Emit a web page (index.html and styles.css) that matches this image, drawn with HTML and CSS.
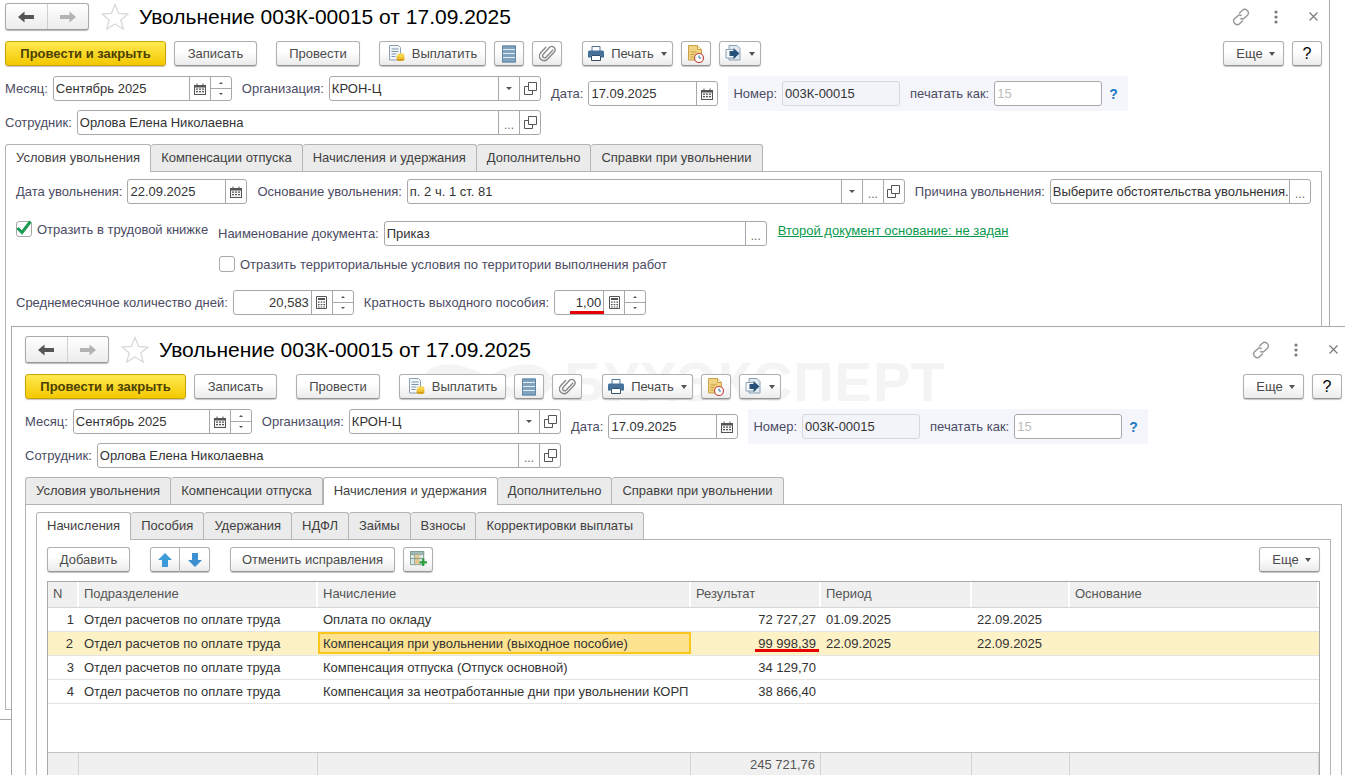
FILE: index.html
```html
<!DOCTYPE html>
<html lang="ru">
<head>
    <meta charset="UTF-8">
    <title>Увольнение 003К-00015 от 17.09.2025</title>
    <link rel="stylesheet" href="styles.css">
</head>
<body>

<svg class="sprite" xmlns="http://www.w3.org/2000/svg">
    <symbol id="i-back" viewBox="0 0 16 12"><path d="M0 6 6.5.5V4H16v4H6.5v3.5z"/></symbol>
    <symbol id="i-forward" viewBox="0 0 16 12"><path d="M16 6 9.5.5V4H0v4h9.5v3.5z"/></symbol>
    <symbol id="i-star" viewBox="0 0 28 27"><path d="M14 1.5 17.6 10.4 27 11 19.8 17 22.2 26 14 21 5.8 26 8.2 17 1 11 10.4 10.4z" fill="#fff" stroke="#d9d9d9" stroke-width="1.3"/></symbol>
    <symbol id="i-link" viewBox="0 0 18 18"><g fill="none" stroke="#9a9a9a" stroke-width="1.5" stroke-linecap="round"><path d="M7.5 5 10.5 2.2a3 3 0 0 1 4.4 0l.6.6a3 3 0 0 1 0 4.4L12.4 10a3 3 0 0 1-3.6.5"/><path d="M10.5 13 7.5 15.8a3 3 0 0 1-4.4 0l-.6-.6a3 3 0 0 1 0-4.4L5.6 8a3 3 0 0 1 3.6-.5"/></g></symbol>
    <symbol id="i-dots" viewBox="0 0 4 14"><g fill="#7b7b7b"><circle cx="2" cy="2" r="1.6"/><circle cx="2" cy="7" r="1.6"/><circle cx="2" cy="12" r="1.6"/></g></symbol>
    <symbol id="i-close" viewBox="0 0 9 9"><path d="M.5.5l8 8M8.5.5l-8 8" stroke="#777" stroke-width="1.1" fill="none"/></symbol>
    <symbol id="i-cal" viewBox="0 0 12 12"><path d="M0 2h2.5V.5h1V2h5V.5h1V2H12v10H0z" fill="#555"/><path d="M1 4.5h10V11H1z" fill="#f4f4f4"/><path d="M2 5.5h2v1.3H2zM5 5.5h2v1.3H5zM8 5.5h2v1.3H8zM2 8h2v1.3H2zM5 8h2v1.3H5zM8 8h2v1.3H8z" fill="#555"/></symbol>
    <symbol id="i-calc" viewBox="0 0 11 13"><path d="M.5.5h10v12H.5z" fill="#fff" stroke="#555"/><path d="M2 2h7v2H2zM2 5.5h1.6v1.3H2zM4.7 5.5h1.6v1.3H4.7zM7.4 5.5H9v1.3H7.4zM2 8h1.6v1.3H2zM4.7 8h1.6v1.3H4.7zM7.4 8H9v1.3H7.4zM2 10.4h1.6v1.2H2zM4.7 10.4h1.6v1.2H4.7zM7.4 10.4H9v1.2H7.4z" fill="#555"/></symbol>
    <symbol id="i-open" viewBox="0 0 13 13"><g fill="none" stroke="#555"><path d="M4.5.5h8v8h-8z"/><path d="M4 4.5H.5v8h8V9"/></g></symbol>
    <symbol id="i-pay" viewBox="0 0 17 17"><path d="M1.5.5h9l2 2V15h-11z" fill="#f4f7fa" stroke="#8d9fb2"/><path d="M3.5 4h7M3.5 6.5h7M3.5 9h5M3.5 11.5h4" stroke="#7d93aa"/><ellipse cx="12.5" cy="14" rx="4" ry="2" fill="#d69d14"/><ellipse cx="12.5" cy="12" rx="4" ry="2" fill="#efc236"/><ellipse cx="13" cy="10" rx="3.5" ry="1.8" fill="#f6d54d"/></symbol>
    <symbol id="i-list" viewBox="0 0 14 18"><path d="M0 .5h14v17H0z" fill="#7fa3bf"/><path d="M0 4.5h14M0 8.500h14M0 12.500h14" stroke="#e6eef4" stroke-width="1.2"/><path d="M.5 1h13v16H.5z" fill="none" stroke="#5f85a3"/></symbol>
    <symbol id="i-clip" viewBox="0 0 18 18"><path d="M15 5.500 7.500 13.500a2.200 2.200 0 0 1-3.200-3L11 3.200a3.500 3.500 0 0 1 5 4.900L8.500 16a5 5 0 0 1-7-7l6-6.300" transform="translate(0 -.5)" fill="none" stroke="#868686" stroke-width="1.4"/></symbol>
    <symbol id="i-print" viewBox="0 0 16 15"><path d="M4 .5h8v5H4z" fill="#fff" stroke="#4d7396"/><path d="M1.500 4.500h13a1.500 1.500 0 0 1 1.500 1.500v5.500h-3V9H3v2.500H0V6a1.500 1.500 0 0 1 1.500-1.500z" fill="#45709a"/><path d="M3.500 9.500h9v5h-9z" fill="#fff" stroke="#33506c"/></symbol>
    <symbol id="i-report" viewBox="0 0 16 18"><path d="M.5.500h9l4 4V15H.5z" fill="#f0d283" stroke="#c9a24a"/><path d="M9.500.5v4h4" fill="#fbeec4" stroke="#c9a24a"/><path d="M2.500 7h6M2.500 9.500h4M2.500 12h3" stroke="#c89f3d"/><circle cx="11" cy="13" r="4.500" fill="#fff" stroke="#c2483e" stroke-width="1.200"/><path d="M11 10.500V13h2" stroke="#2f6ea5" fill="none"/></symbol>
    <symbol id="i-move" viewBox="0 0 16 17"><path d="M3.500.5h8l3 3V15h-11z" fill="#e3e9f0" stroke="#8aa0b5"/><path d="M.5 4.500h7l2 2V13H.5z" fill="#f7f9fb" stroke="#8aa0b5"/><path d="M4 6h4V3l6 5.500L8 14v-3H4z" fill="#27517a"/></symbol>
    <symbol id="i-up" viewBox="0 0 14 14"><path d="M7 0 14 7H10V14H4V7H0z" fill="#3c9ad8"/></symbol>
    <symbol id="i-down" viewBox="0 0 14 14"><path d="M7 14 14 7H10V0H4V7H0z" fill="#3c8fd0"/></symbol>
    <symbol id="i-addcol" viewBox="0 0 18 18"><path d="M.5.500h14v14H.5z" fill="#dbe8e2" stroke="#7d9a93"/><path d="M.5.500h14v3H.5z" fill="#a6bdb6" stroke="#7d9a93"/><path d="M5 4v10" stroke="#7d9a93"/><path d="M5.500 4h4.500v10H5.500z" fill="#e8c68a"/><path d="M.5 8h14" stroke="#7d9a93"/><path d="M10 12h8M14 8v8" stroke="#2f9e3f" stroke-width="2.400"/></symbol>
    <symbol id="i-check" viewBox="0 0 16 15"><path d="M1.500 8 6 12.500 14.500 1.500" fill="none" stroke="#1d9a52" stroke-width="3"/></symbol>
    <symbol id="i-mark" viewBox="0 0 150 50"><path d="M4 25C14 5 40 5 75 25 110 45 136 45 146 25M4 25C14 45 40 45 75 25 110 5 136 5 146 25" fill="none" stroke="currentColor" stroke-width="11"/></symbol>
</svg>

<section class="window window-back">
    <div class="win-head">
        <div class="nav-group">
            <span class="nav-btn"><svg class="ico-nav dark"><use href="#i-back"/></svg></span>
            <span class="nav-btn"><svg class="ico-nav light"><use href="#i-forward"/></svg></span>
        </div>
        <svg class="ico-star"><use href="#i-star"/></svg>
        <h1 class="title">Увольнение 003К-00015 от 17.09.2025</h1>
        <div class="win-tools">
            <svg class="ico-link"><use href="#i-link"/></svg>
            <svg class="ico-dots"><use href="#i-dots"/></svg>
            <svg class="ico-close"><use href="#i-close"/></svg>
        </div>
    </div>

    <div class="commands">
        <button class="btn btn-default w-post-close">Провести и закрыть</button>
        <button class="btn w-save">Записать</button>
        <button class="btn w-post">Провести</button>
        <button class="btn w-pay"><svg class="ico-17"><use href="#i-pay"/></svg>Выплатить</button>
        <button class="btn btn-icon"><svg class="ico-list"><use href="#i-list"/></svg></button>
        <button class="btn btn-icon"><svg class="ico-17"><use href="#i-clip"/></svg></button>
        <button class="btn w-print"><svg class="ico-print"><use href="#i-print"/></svg>Печать<i class="caret"></i></button>
        <button class="btn btn-icon"><svg class="ico-report"><use href="#i-report"/></svg></button>
        <button class="btn w-move"><svg class="ico-17"><use href="#i-move"/></svg><i class="caret"></i></button>
        <div class="commands-right">
            <button class="btn w-more">Еще<i class="caret"></i></button>
            <button class="btn btn-help">?</button>
        </div>
    </div>

    <div class="head-fields">
        <div class="head-left">
            <div class="line">
                <label class="lbl">Месяц:</label>
                <div class="field w-month"><span class="val">Сентябрь 2025</span><span class="fbtn"><svg class="ico-12"><use href="#i-cal"/></svg></span><span class="fbtn spin"><i class="tri up"></i><i class="tri"></i></span></div>
                <label class="lbl lbl-gap">Организация:</label>
                <div class="field grow"><span class="val">КРОН-Ц</span><span class="fbtn"><i class="tri"></i></span><span class="fbtn"><svg class="ico-13"><use href="#i-open"/></svg></span></div>
            </div>
            <div class="line">
                <label class="lbl">Сотрудник:</label>
                <div class="field grow"><span class="val">Орлова Елена Николаевна</span><span class="fbtn dots">...</span><span class="fbtn"><svg class="ico-13"><use href="#i-open"/></svg></span></div>
            </div>
        </div>
        <div class="head-date">
            <label class="lbl">Дата:</label>
            <div class="field w-date"><span class="val">17.09.2025</span><span class="fbtn"><svg class="ico-12"><use href="#i-cal"/></svg></span></div>
        </div>
        <div class="number-box">
            <label class="lbl">Номер:</label>
            <div class="field field-soft w-number"><span class="val">003К-00015</span></div>
            <label class="lbl lbl-print">печатать как:</label>
            <div class="field w-print-as"><span class="val val-muted">15</span></div>
            <span class="hint">?</span>
        </div>
    </div>

    <div class="tabs">
        <span class="tab active">Условия увольнения</span>
        <span class="tab">Компенсации отпуска</span>
        <span class="tab">Начисления и удержания</span>
        <span class="tab">Дополнительно</span>
        <span class="tab">Справки при увольнении</span>
    </div>
    <div class="panel panel-conditions">
        <div class="line">
            <label class="lbl">Дата увольнения:</label>
            <div class="field w-dismiss"><span class="val">22.09.2025</span><span class="fbtn"><svg class="ico-12"><use href="#i-cal"/></svg></span></div>
            <label class="lbl lbl-gap">Основание увольнения:</label>
            <div class="field w-basis"><span class="val">п. 2 ч. 1 ст. 81</span><span class="fbtn"><i class="tri"></i></span><span class="fbtn dots">...</span><span class="fbtn"><svg class="ico-13"><use href="#i-open"/></svg></span></div>
            <label class="lbl lbl-gap">Причина увольнения:</label>
            <div class="field grow"><span class="val">Выберите обстоятельства увольнения...</span><span class="fbtn dots">...</span></div>
        </div>
        <div class="line line-doc">
            <span class="check-wrap check-main"><span class="check"><svg class="ico-check"><use href="#i-check"/></svg></span><span class="lbl">Отразить в трудовой книжке</span></span>
            <label class="lbl lbl-doc">Наименование документа:</label>
            <div class="field w-doc"><span class="val">Приказ</span><span class="fbtn dots">...</span></div>
            <a class="doc-link">Второй документ основание: не задан</a>
        </div>
        <div class="check-wrap check-terr"><span class="check"></span><span class="lbl">Отразить территориальные условия по территории выполнения работ</span></div>
        <div class="line line-days">
            <label class="lbl">Среднемесячное количество дней:</label>
            <div class="field w-days"><span class="val val-num">20,583</span><span class="fbtn"><svg class="ico-calc"><use href="#i-calc"/></svg></span><span class="fbtn spin"><i class="tri up"></i><i class="tri"></i></span></div>
            <label class="lbl lbl-gap">Кратность выходного пособия:</label>
            <div class="field w-rate"><span class="val val-num marked">1,00</span><span class="fbtn"><svg class="ico-calc"><use href="#i-calc"/></svg></span><span class="fbtn spin"><i class="tri up"></i><i class="tri"></i></span></div>
        </div>
    </div>
</section>

<section class="window window-front">
    <div class="watermark"><svg class="mark"><use href="#i-mark"/></svg><span>БУХЭКСПЕРТ</span></div>
    <div class="win-head">
        <div class="nav-group">
            <span class="nav-btn"><svg class="ico-nav dark"><use href="#i-back"/></svg></span>
            <span class="nav-btn"><svg class="ico-nav light"><use href="#i-forward"/></svg></span>
        </div>
        <svg class="ico-star"><use href="#i-star"/></svg>
        <h1 class="title">Увольнение 003К-00015 от 17.09.2025</h1>
        <div class="win-tools">
            <svg class="ico-link"><use href="#i-link"/></svg>
            <svg class="ico-dots"><use href="#i-dots"/></svg>
            <svg class="ico-close"><use href="#i-close"/></svg>
        </div>
    </div>

    <div class="commands">
        <button class="btn btn-default w-post-close">Провести и закрыть</button>
        <button class="btn w-save">Записать</button>
        <button class="btn w-post">Провести</button>
        <button class="btn w-pay"><svg class="ico-17"><use href="#i-pay"/></svg>Выплатить</button>
        <button class="btn btn-icon"><svg class="ico-list"><use href="#i-list"/></svg></button>
        <button class="btn btn-icon"><svg class="ico-17"><use href="#i-clip"/></svg></button>
        <button class="btn w-print"><svg class="ico-print"><use href="#i-print"/></svg>Печать<i class="caret"></i></button>
        <button class="btn btn-icon"><svg class="ico-report"><use href="#i-report"/></svg></button>
        <button class="btn w-move"><svg class="ico-17"><use href="#i-move"/></svg><i class="caret"></i></button>
        <div class="commands-right">
            <button class="btn w-more">Еще<i class="caret"></i></button>
            <button class="btn btn-help">?</button>
        </div>
    </div>

    <div class="head-fields">
        <div class="head-left">
            <div class="line">
                <label class="lbl">Месяц:</label>
                <div class="field w-month"><span class="val">Сентябрь 2025</span><span class="fbtn"><svg class="ico-12"><use href="#i-cal"/></svg></span><span class="fbtn spin"><i class="tri up"></i><i class="tri"></i></span></div>
                <label class="lbl lbl-gap">Организация:</label>
                <div class="field grow"><span class="val">КРОН-Ц</span><span class="fbtn"><i class="tri"></i></span><span class="fbtn"><svg class="ico-13"><use href="#i-open"/></svg></span></div>
            </div>
            <div class="line">
                <label class="lbl">Сотрудник:</label>
                <div class="field grow"><span class="val">Орлова Елена Николаевна</span><span class="fbtn dots">...</span><span class="fbtn"><svg class="ico-13"><use href="#i-open"/></svg></span></div>
            </div>
        </div>
        <div class="head-date">
            <label class="lbl">Дата:</label>
            <div class="field w-date"><span class="val">17.09.2025</span><span class="fbtn"><svg class="ico-12"><use href="#i-cal"/></svg></span></div>
        </div>
        <div class="number-box">
            <label class="lbl">Номер:</label>
            <div class="field field-soft w-number"><span class="val">003К-00015</span></div>
            <label class="lbl lbl-print">печатать как:</label>
            <div class="field w-print-as"><span class="val val-muted">15</span></div>
            <span class="hint">?</span>
        </div>
    </div>

    <div class="tabs">
        <span class="tab">Условия увольнения</span>
        <span class="tab">Компенсации отпуска</span>
        <span class="tab active">Начисления и удержания</span>
        <span class="tab">Дополнительно</span>
        <span class="tab">Справки при увольнении</span>
    </div>
    <div class="panel panel-accruals">
        <div class="tabs">
            <span class="tab active">Начисления</span>
            <span class="tab">Пособия</span>
            <span class="tab">Удержания</span>
            <span class="tab">НДФЛ</span>
            <span class="tab">Займы</span>
            <span class="tab">Взносы</span>
            <span class="tab">Корректировки выплаты</span>
        </div>
        <div class="panel panel-inner">
            <div class="commands table-commands">
                <button class="btn w-add">Добавить</button>
                <div class="btn-pair">
                    <button class="btn btn-half"><svg class="ico-14"><use href="#i-up"/></svg></button>
                    <button class="btn btn-half"><svg class="ico-14"><use href="#i-down"/></svg></button>
                </div>
                <button class="btn w-undo">Отменить исправления</button>
                <button class="btn btn-icon"><svg class="ico-17"><use href="#i-addcol"/></svg></button>
                <div class="commands-right">
                    <button class="btn w-more">Еще<i class="caret"></i></button>
                </div>
            </div>

            <div class="grid">
                <div class="grid-row grid-head">
                    <span class="cell">N</span>
                    <span class="cell">Подразделение</span>
                    <span class="cell">Начисление</span>
                    <span class="cell">Результат</span>
                    <span class="cell">Период</span>
                    <span class="cell"></span>
                    <span class="cell">Основание</span>
                </div>
                <div class="grid-body">
                    <div class="grid-row">
                        <span class="cell num">1</span>
                        <span class="cell">Отдел расчетов по оплате труда</span>
                        <span class="cell">Оплата по окладу</span>
                        <span class="cell num">72 727,27</span>
                        <span class="cell">01.09.2025</span>
                        <span class="cell">22.09.2025</span>
                        <span class="cell"></span>
                    </div>
                    <div class="grid-row selected">
                        <span class="cell num">2</span>
                        <span class="cell">Отдел расчетов по оплате труда</span>
                        <span class="cell current">Компенсация при увольнении (выходное пособие)</span>
                        <span class="cell num"><span class="marked">99 998,39</span></span>
                        <span class="cell">22.09.2025</span>
                        <span class="cell">22.09.2025</span>
                        <span class="cell"></span>
                    </div>
                    <div class="grid-row">
                        <span class="cell num">3</span>
                        <span class="cell">Отдел расчетов по оплате труда</span>
                        <span class="cell">Компенсация отпуска (Отпуск основной)</span>
                        <span class="cell num">34 129,70</span>
                        <span class="cell"></span>
                        <span class="cell"></span>
                        <span class="cell"></span>
                    </div>
                    <div class="grid-row">
                        <span class="cell num">4</span>
                        <span class="cell">Отдел расчетов по оплате труда</span>
                        <span class="cell">Компенсация за неотработанные дни при увольнении КОРП</span>
                        <span class="cell num">38 866,40</span>
                        <span class="cell"></span>
                        <span class="cell"></span>
                        <span class="cell"></span>
                    </div>
                </div>
                <div class="grid-row grid-foot">
                    <span class="cell"></span>
                    <span class="cell"></span>
                    <span class="cell"></span>
                    <span class="cell num">245 721,76</span>
                    <span class="cell"></span>
                    <span class="cell"></span>
                    <span class="cell"></span>
                </div>
            </div>
        </div>
    </div>
</section>

</body>
</html>
```

FILE: styles.css
```css
html, body {
    margin: 0;
    height: 775px;
    overflow: hidden;
    background: white;
}

body {
    font-family: "Liberation Sans", Arial, sans-serif;
    font-size: 13px;
    color: #3a3a3a;
}

.sprite {
    position: absolute;
    width: 0;
    height: 0;
}

svg {
    display: block;
    flex: none;
}

/* windows */
.window {
    box-sizing: border-box;
    width: 1330px;
    background: white;
}

.window-back {
    height: 720px;
    padding: 3px 7px 0 5px;
    border-right: 1px solid #a9a9a9;
    border-bottom: 1px solid #a9a9a9;
}

.window-front {
    position: absolute;
    left: 11px;
    top: 326px;
    z-index: 1;
    width: 1345px;
    height: 470px;
    padding: 9px 0 0 13px;
    border: 1px solid #a9a9a9;
    border-right: none;
}

.window-front > * {
    width: 1317px;
}

.watermark {
    position: absolute;
    left: 410px;
    top: 30px;
    z-index: -1;
    display: flex;
    align-items: center;
    gap: 12px;
    color: #f4f4f4;
    font-size: 56px;
    font-weight: bold;
    line-height: 50px;
    letter-spacing: 1px;
}

.mark {
    width: 130px;
    height: 50px;
}

.win-head {
    display: flex;
    align-items: center;
    height: 27px;
    margin-bottom: 11px;
}

.nav-group {
    display: flex;
    box-sizing: border-box;
    width: 84px;
    height: 27px;
    border: 1px solid #ababab;
    border-bottom-color: #999;
    border-radius: 3px;
    background: linear-gradient(#fff, #ececec);
    box-shadow: 0 1px 1px #bbb;
}

.nav-btn {
    flex: 1;
    display: flex;
    align-items: center;
    justify-content: center;
}

.nav-btn + .nav-btn {
    border-left: 1px solid #cfcfcf;
}

.ico-nav {
    width: 16px;
    height: 12px;
}

.ico-nav.dark { fill: #555; }
.ico-nav.light { fill: #b3b3b3; }

.ico-star {
    width: 28px;
    height: 27px;
    margin-left: 12px;
}

.title {
    margin: 0 0 0 10px;
    font-size: 21px;
    font-weight: normal;
    color: black;
    white-space: nowrap;
}

.win-tools {
    display: flex;
    align-items: center;
    margin-left: auto;
}

.ico-link {
    width: 18px;
    height: 18px;
    margin-right: 24px;
}

.ico-dots {
    width: 4px;
    height: 14px;
    margin-right: 31px;
}

.ico-close {
    width: 9px;
    height: 9px;
    margin-right: 4px;
}

/* buttons */
.commands {
    display: flex;
    gap: 8px;
    height: 25px;
    margin-bottom: 10px;
}

.commands-right {
    display: flex;
    gap: 8px;
    margin-left: auto;
}

.btn {
    display: flex;
    align-items: center;
    justify-content: center;
    box-sizing: border-box;
    height: 25px;
    padding: 0;
    border: 1px solid #b0b0b0;
    border-bottom-color: #949494;
    border-radius: 3px;
    background: linear-gradient(#fff 40%, #ebebeb);
    box-shadow: 0 1px 1px #c4c4c4;
    color: #4a4a4a;
    font-family: inherit;
    font-size: 13px;
}

.btn-default {
    border-color: #c9a400;
    background: linear-gradient(#ffea52, #f3c800);
    color: #4c4100;
    font-weight: bold;
}

.btn-icon {
    width: 30px;
}

.btn-help {
    width: 30px;
    font-size: 16px;
    color: black;
}

.w-post-close { width: 161px; }
.w-save { width: 83px; }
.w-post { width: 84px; margin-left: 11px; }
.w-pay { width: 107px; margin-left: 11px; gap: 7px; }
.w-print { width: 91px; margin-left: 12px; gap: 7px; }
.w-move { width: 42px; gap: 7px; }
.w-more { width: 61px; gap: 6px; padding-left: 4px; }
.w-add { width: 83px; }
.w-undo { width: 165px; margin-left: 12px; }

.btn-pair {
    display: flex;
    margin-left: 12px;
}

.btn-half {
    width: 30px;
    border-radius: 3px 0 0 3px;
}

.btn-half + .btn-half {
    border-left: none;
    border-radius: 0 3px 3px 0;
}

.caret {
    width: 0;
    height: 0;
    border: 3.5px solid transparent;
    border-top: 4px solid #555;
    border-bottom: none;
}

.ico-17 { width: 17px; height: 17px; }
.ico-list { width: 14px; height: 18px; }
.ico-print { width: 16px; height: 15px; }
.ico-report { width: 16px; height: 18px; }
.ico-14 { width: 14px; height: 14px; }
.ico-12 { width: 12px; height: 12px; }
.ico-13 { width: 13px; height: 13px; }
.ico-calc { width: 11px; height: 13px; }

/* form fields */
.head-fields {
    display: flex;
    align-items: flex-start;
    margin-bottom: 9px;
}

.head-left {
    display: flex;
    flex-direction: column;
    gap: 9px;
    width: 536px;
}

.head-date {
    display: flex;
    align-items: center;
    margin: 5px 0 0 10px;
}

.number-box {
    display: flex;
    align-items: center;
    box-sizing: border-box;
    height: 35px;
    margin-left: 10px;
    padding: 0 8px 0 5px;
    background: #f5f6fc;
}

.line {
    display: flex;
    align-items: center;
}

.lbl {
    margin-right: 5px;
    white-space: nowrap;
    color: #4b4b63;
}

.lbl-gap {
    margin-left: 10px;
}

.lbl-print {
    margin-left: 10px;
}

.field {
    display: flex;
    box-sizing: border-box;
    height: 25px;
    border: 1px solid #a8a8a8;
    border-radius: 3px;
    background: white;
}

.field-soft {
    border-color: #d7d7de;
    background: #f3f4f9;
}

.grow {
    flex: 1;
    min-width: 0;
}

.val {
    flex: 1;
    min-width: 0;
    padding-left: 2px;
    line-height: 23px;
    white-space: nowrap;
    overflow: hidden;
    color: #333;
}

.val-num {
    padding: 0 2px 0 0;
    text-align: right;
}

.val-muted {
    color: #bdbdbd;
}

.fbtn {
    display: flex;
    flex: none;
    align-items: center;
    justify-content: center;
    width: 20px;
    border-left: 1px solid #a8a8a8;
}

.fbtn.dots {
    align-items: flex-end;
    line-height: 18px;
    color: #666;
    font-size: 12px;
}

.fbtn.spin {
    flex-direction: column;
    justify-content: space-around;
    background: linear-gradient(transparent 11px, #a8a8a8 11px, #a8a8a8 12px, transparent 12px);
}

.tri {
    width: 0;
    height: 0;
    border: 3px solid transparent;
    border-top: 3px solid #555;
    border-bottom: none;
}

.spin .tri {
    border-width: 2px 2px 0;
}

.spin .tri.up {
    border-width: 0 2px 2px;
    border-top: none;
    border-bottom: 2px solid #555;
}

.w-month { width: 179px; }
.w-date { width: 130px; }
.w-number { width: 118px; }
.w-print-as { width: 108px; }
.w-dismiss { width: 120px; }
.w-basis { width: 498px; }
.w-doc { width: 383px; }
.w-days { width: 121px; }
.w-rate { width: 92px; }

.hint {
    margin-left: 5px;
    color: #1a7ac2;
    font-weight: bold;
    font-size: 14px;
    padding: 0 2px;
}

.marked {
    position: relative;
}

.marked::after {
    content: "";
    position: absolute;
    left: -3px;
    right: -3px;
    bottom: -1px;
    height: 3px;
    background: #e60000;
}

.val.marked {
    overflow: visible;
}

.val.marked::after {
    left: 15px;
    right: -1px;
    bottom: 0;
}

/* tabs */
.tabs {
    display: flex;
    align-items: flex-end;
    height: 27px;
}

.tab {
    box-sizing: border-box;
    height: 27px;
    padding: 0 10px;
    border: 1px solid #b4b4b4;
    border-bottom: none;
    border-left: none;
    border-radius: 3px 3px 0 0;
    background: #ebebeb;
    line-height: 26px;
    white-space: nowrap;
    color: #3f3f3f;
}

.tab:first-child {
    border-left: 1px solid #b4b4b4;
}

.tab.active {
    height: 28px;
    margin-bottom: -1px;
    border-left: 1px solid #b4b4b4;
    background: white;
    position: relative;
}

.tab.active:first-child {
    margin-left: 0;
}

.tab.active + .tab {
    border-left: none;
}

.panel {
    box-sizing: border-box;
    border: 1px solid #b4b4b4;
}

.panel-conditions {
    height: 539px;
    padding: 7px 10px 0;
}

.panel-accruals {
    height: 280px;
    padding: 7px 10px 0;
}

.panel-inner {
    height: 270px;
    padding: 7px 10px 0;
}

.line-doc {
    align-items: flex-start;
    margin-top: 17px;
}

.line-doc .lbl-doc {
    line-height: 25px;
}

.check-wrap {
    display: flex;
    align-items: center;
}

.check {
    box-sizing: border-box;
    display: flex;
    align-items: center;
    justify-content: center;
    width: 16px;
    height: 16px;
    margin-right: 5px;
    border: 1px solid #a8a8a8;
    border-radius: 3px;
    background: white;
}

.ico-check {
    width: 16px;
    height: 15px;
    margin-top: -3px;
}

.check-main {
    width: 202px;
}

.check-terr {
    margin: 10px 0 0 203px;
}

.doc-link {
    margin: 2px 0 0 11px;
    color: #0a9a4c;
    text-decoration: underline;
    white-space: nowrap;
}

.line-days {
    margin-top: 18px;
}

/* table */
.table-commands {
    margin-bottom: 9px;
}

.grid {
    border: 1px solid #a9a9a9;
}

.grid-row {
    display: grid;
    grid-template-columns: 31px 239px 373px 130px 151px 98px 1fr;
    height: 24px;
    border-bottom: 1px solid #e4e4e4;
    box-sizing: border-box;
}

.grid-body {
    height: 144px;
}

.cell {
    padding: 0 5px;
    line-height: 23px;
    white-space: nowrap;
    overflow: hidden;
    color: #333;
}

.num {
    text-align: right;
}

.grid-head {
    height: 26px;
    border-bottom-color: #d6d6d6;
}

.grid-head .cell,
.grid-foot .cell {
    background: #f0f0f0;
    border-right: 2px solid white;
    color: #555;
    line-height: 24px;
}

.grid-foot {
    height: 26px;
    border-top: 1px solid #c4c4c4;
    border-bottom: none;
}

.grid-foot .cell {
    border-right: 1px solid #d4d4d4;
}

.selected {
    background: #fdf1c6;
}

.selected .cell {
    line-height: 23px;
}

.selected .num + .cell,
.selected .cell:first-child {
    border-right: 1px solid transparent;
}

.current {
    box-sizing: border-box;
    padding-left: 3px;
    line-height: 19px !important;
    border: 2px solid #fcc620;
    background: #fde28f;
    margin-bottom: 1px;
}
```
